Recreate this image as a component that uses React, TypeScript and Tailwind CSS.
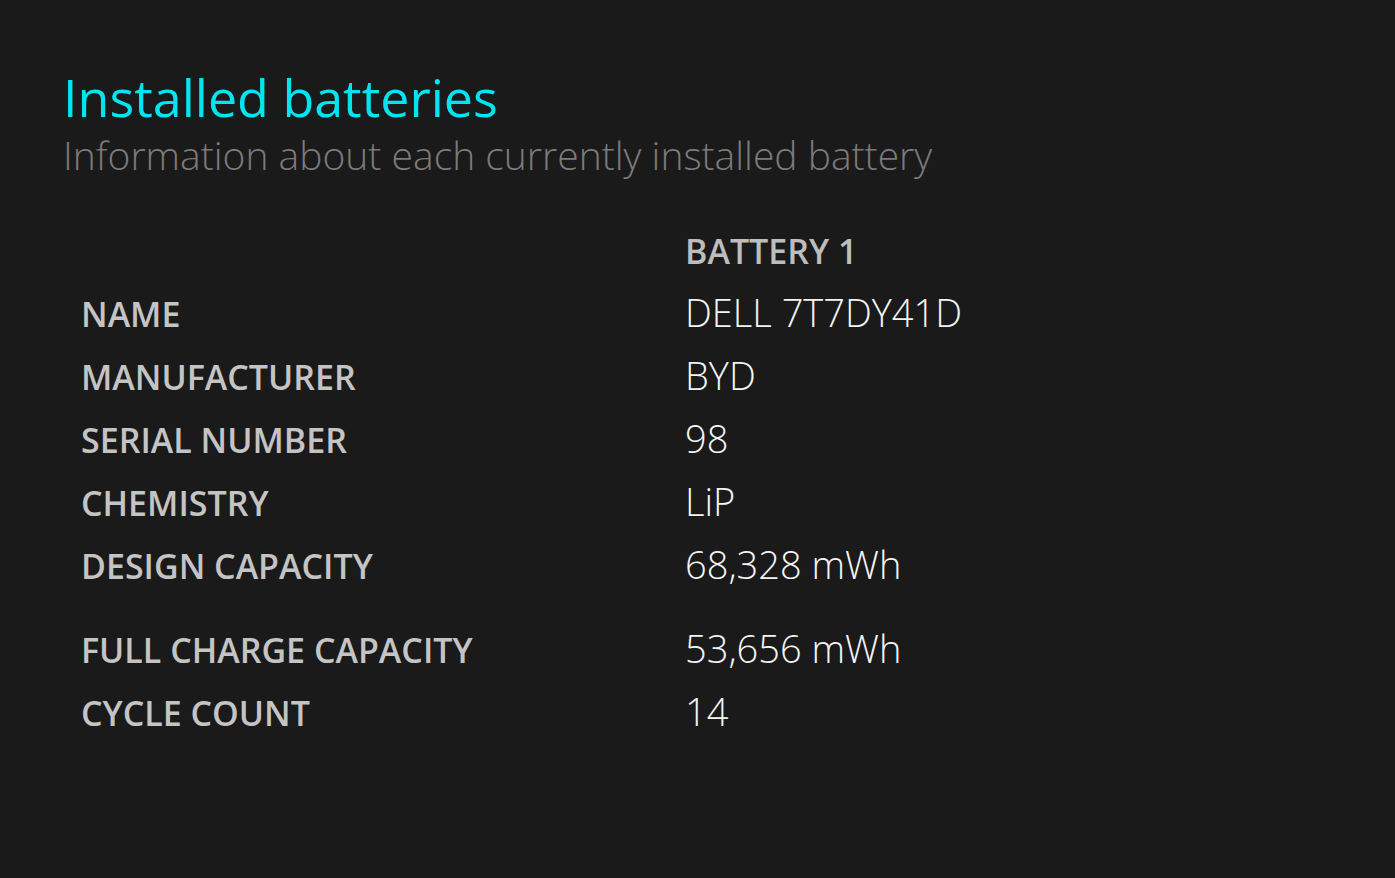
const rows: [string, string][] = [
  ["NAME", "DELL 7T7DY41D"],
  ["MANUFACTURER", "BYD"],
  ["SERIAL NUMBER", "98"],
  ["CHEMISTRY", "LiP"],
  ["DESIGN CAPACITY", "68,328 mWh"],
];

const rows2: [string, string][] = [
  ["FULL CHARGE CAPACITY", "53,656 mWh"],
  ["CYCLE COUNT", "14"],
];

function Row({ label, value }: { label: string; value: string }) {
  return (
    <div className="grid h-[63px] grid-cols-[604px_1fr] items-baseline leading-[63px]">
      <div className="text-[34px] font-semibold text-[#c4c4c4]">{label}</div>
      <div className="text-[38px] font-light text-[#f4f4f4]">{value}</div>
    </div>
  );
}

export default function App() {
  return (
    <div
      className="min-h-screen bg-[#1a1a1a] px-[63px] pt-[65px]"
      style={{ fontFamily: '"Open Sans", "Noto Sans", sans-serif' }}
    >
      <h1 className="text-[52px] leading-[64px] font-normal text-[#00e5ef]">Installed batteries</h1>
      <p className="text-[39px] leading-[52px] font-light text-[#7b7b7b]">
        Information about each currently installed battery
      </p>

      <div className="mt-[40px] pl-[18px]">
        <div className="grid h-[60px] grid-cols-[604px_1fr] items-baseline leading-[60px]">
          <div></div>
          <div className="text-[34px] font-semibold text-[#bdbdbd]">BATTERY 1</div>
        </div>
        {rows.map(([l, v]) => (
          <Row key={l} label={l} value={v} />
        ))}
        <div className="h-[21px]"></div>
        {rows2.map(([l, v]) => (
          <Row key={l} label={l} value={v} />
        ))}
      </div>
    </div>
  );
}
